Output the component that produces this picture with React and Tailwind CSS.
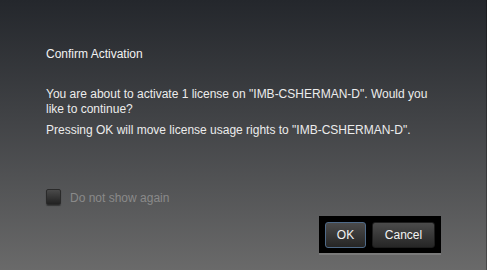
import { useState } from 'react'

export default function App() {
  const [dontShow, setDontShow] = useState(false)

  return (
    <div
      className="h-[270px] w-full flex flex-col bg-gradient-to-b from-[#24272c] to-[#6a6a6a] border-r border-r-black/30 text-[12px] leading-[15px]"
      style={{ fontFamily: '"Liberation Sans", Arial, sans-serif' }}
    >
      <div className="pl-[46px] pr-[46px] pt-[47px]">
        <h1 className="text-[#f2f2f2] font-normal">Confirm Activation</h1>

        <div className="mt-[25px] text-[#ececec]">
          <p>You are about to activate 1 license on "IMB-CSHERMAN-D". Would you like to continue?</p>
          <p className="mt-[6px]">Pressing OK will move license usage rights to "IMB-CSHERMAN-D".</p>
        </div>

        <label className="mt-[50px] flex items-center gap-[9px] cursor-pointer select-none">
          <span
            onClick={() => setDontShow(!dontShow)}
            className="w-[15px] h-[16px] rounded-[2px] bg-gradient-to-b from-[#4a4a4a] to-[#222] border border-[#2a2a2a] shadow-[0_1px_1px_rgba(0,0,0,0.4)] flex items-center justify-center text-[#ccc] text-[10px]"
          >
            {dontShow ? '✓' : ''}
          </span>
          <span className="text-[#8a8a8a] mt-[3px]">Do not show again</span>
        </label>
      </div>

      <div className="flex justify-end pr-[45px] mt-[10px]">
        <div className="bg-black flex gap-[6px] px-[6px] pt-[6px] pb-[5px] border-b-2 border-b-[#7a7a7a]">
          <button className="w-[41px] h-[26px] rounded-[3px] border border-[#4f6a88] bg-gradient-to-b from-[#4b4b4b] to-[#262626] text-[#f2f2f2] text-[12px] leading-none">
            OK
          </button>
          <button className="w-[63px] h-[26px] rounded-[3px] border border-[#1c1c1c] bg-gradient-to-b from-[#4b4b4b] to-[#262626] text-[#f2f2f2] text-[12px] leading-none">
            Cancel
          </button>
        </div>
      </div>
    </div>
  )
}
